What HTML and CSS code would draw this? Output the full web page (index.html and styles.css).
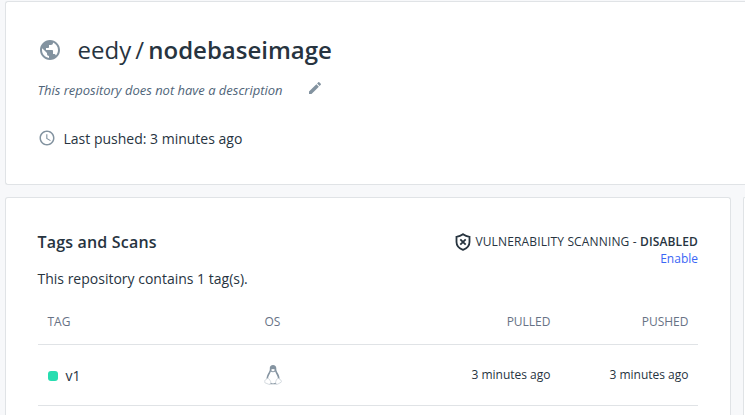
FILE: index.html
```html
<!DOCTYPE html>
<html lang="en">
<head>
<meta charset="utf-8">
<title>eedy/nodebaseimage</title>
<link rel="stylesheet" href="styles.css">
</head>
<body>
<main class="page">
  <header class="card repo">
    <div class="repo-title">
      <svg class="globe" viewBox="0 0 24 24"><path d="M12 2C6.480 2 2 6.480 2 12s4.480 10 10 10 10-4.480 10-10S17.520 2 12 2zm-1 17.930c-3.950-.49-7-3.850-7-7.930 0-.62.080-1.210.210-1.790L9 15v1c0 1.100.9 2 2 2v1.930zm6.900-2.540c-.26-.81-1-1.390-1.900-1.390h-1v-3c0-.55-.45-1-1-1H8v-2h2c.55 0 1-.45 1-1V7h2c1.100 0 2-.9 2-2v-.41c2.930 1.190 5 4.060 5 7.410 0 2.080-.8 3.970-2.100 5.390z"/></svg>
      <h1><span class="owner">eedy</span><span class="slash">/</span><span class="name">nodebaseimage</span></h1>
    </div>
    <div class="description">
      <em>This repository does not have a description</em>
      <svg class="pencil" viewBox="0 0 24 24"><path d="M3 17.250V21h3.750L17.810 9.940l-3.750-3.750L3 17.250zM20.710 7.040c.39-.39.39-1.020 0-1.410l-2.340-2.340c-.39-.39-1.020-.39-1.410 0l-1.830 1.830 3.750 3.750 1.830-1.830z"/></svg>
    </div>
    <div class="pushed">
      <svg class="clock" viewBox="0 0 24 24"><path d="M11.990 2C6.470 2 2 6.480 2 12s4.470 10 9.990 10C17.520 22 22 17.520 22 12S17.520 2 11.990 2zM12 20c-4.420 0-8-3.580-8-8s3.580-8 8-8 8 3.580 8 8-3.580 8-8 8zm.5-13H11v6l5.250 3.150.75-1.230-4.500-2.670z"/></svg>
      <span>Last pushed: 3 minutes ago</span>
    </div>
  </header>
  <div class="columns">
    <section class="card tags">
      <div class="tags-head">
        <h2>Tags and Scans</h2>
        <div class="scan">
          <div class="scan-status">
            <svg class="shield" viewBox="0 0 16 18"><path d="M8 1.200c2 1.500 4.100 2.300 6.500 2.600v5.100c0 3.700-2.500 6.400-6.500 8-4-1.600-6.500-4.300-6.500-8V3.800C3.900 3.500 6 2.700 8 1.200z"/><path d="M5.300 6.300l5.400 5.400M10.700 6.300l-5.400 5.400"/></svg>
            <span>VULNERABILITY SCANNING - <b>DISABLED</b></span>
          </div>
          <a class="enable">Enable</a>
        </div>
      </div>
      <p class="count">This repository contains 1 tag(s).</p>
      <div class="row row-head"><span>TAG</span><span>OS</span><span class="right">PULLED</span><span class="right">PUSHED</span></div>
      <div class="row row-body">
        <span class="tag"><i class="status"></i>v1</span>
        <span class="os"><svg class="tux" viewBox="0 0 18 22"><path class="body" d="M5.800 4.500C5.600 2.200 7 .9 9 .9s3.400 1.300 3.300 3.600c-.1 2 .6 3.300 1.700 5 1.200 2 1.700 3.800 1.400 5.800L13 20.200H5L2.600 15.300c-.2-2 .4-3.800 1.500-5.800C5.300 7.800 5.900 6.500 5.800 4.500z"/><path class="belly" d="M6.800 7.500c1.300 1 3 1 4.400 0 .7 2.500 2.700 4.500 2.800 7 0 2-2 4.900-5 4.900s-5-2.900-5-4.900c.1-2.500 2.100-4.500 2.800-7z"/><path class="face" d="M7.300 5.500C8 4.700 10 4.700 10.700 5.500 11 6.500 9.800 7.300 9 7.300s-2-.8-1.700-1.800z"/><path class="foot" d="M3.300 14.400c1.400-.3 2.300 1.200 3.300 3 .7 1.300-.3 3.200-2 2.800L1 18.800c-.8-.4 0-1.500-.1-2.400.1-.8 1.500-.5 2.400-2zM14.700 14.400c-1.400-.3-2.300 1.200-2.900 3-.5 1.300.2 3.200 1.900 2.800l3.500-2c.7-.5-.3-1.100-.2-2-.1-.8-1.400-.3-2.300-1.800z"/></svg></span>
        <span class="right">3 minutes ago</span>
        <span class="right">3 minutes ago</span>
      </div>
    </section>
    <aside class="card side"></aside>
  </div>
</main>
</body>
</html>
```
FILE: styles.css
```css
* { box-sizing: border-box; }
body {
  margin: 0;
  height: 415px;
  overflow: hidden;
  background: #f7f8fa;
  color: #27343f;
  font-family: "Open Sans", sans-serif;
  font-size: 14px;
}
h1, h2, p { margin: 0; }
svg { display: block; flex: none; fill: #8393a0; }
.page { height: 415px; padding: 1px 0 0 5px; overflow: hidden; }
.card {
  background: #fff;
  border: 1px solid #e0e3e6;
  border-radius: 3px;
}
.repo { height: 184px; padding: 32px 32px 0 31.5px; border-right: 0; border-radius: 3px 0 0 3px; }
.repo-title { display: flex; align-items: center; height: 32px; }
.globe { width: 24px; height: 24px; }
h1 {
  display: flex;
  margin: 0 0 0 16px;
  font-size: 24px;
  line-height: 32px;
  font-weight: 400;
}
.slash { margin: 0 4.300px 0 4px; }
.name { font-weight: 600; letter-spacing: -.01px; }
.description {
  display: flex;
  align-items: center;
  height: 20px;
  margin-top: 14px;
  color: #506579;
  font-size: 13px;
}
.description em { letter-spacing: -.015px; }
.pencil { width: 16px; height: 16px; margin: -4px 0 0 25px; }
.pushed { display: flex; align-items: center; height: 20px; margin-top: 28px; }
.clock { width: 18px; height: 18px; margin-right: 8px; }
.columns { display: flex; gap: 12px; margin-top: 12px; }
.tags { flex: none; width: 726px; height: 218px; padding: 32px 32px 0 31.5px; border-bottom: 0; border-radius: 3px 3px 0 0; }
.side { flex: 1; height: 218px; border-width: 1px 0 0 1px; border-radius: 3px 0 0 0; }
.tags-head { display: flex; justify-content: space-between; height: 39px; }
h2 { font-size: 16px; font-weight: 600; line-height: 24px; letter-spacing: .18px; }
.scan { display: flex; flex-direction: column; align-items: flex-end; font-size: 12px; line-height: 17px; padding-top: 3px; }
.scan-status { display: flex; align-items: center; height: 17px; letter-spacing: .14px; }
.shield { width: 16px; height: 18px; margin-right: 4px; fill: none; stroke: #27343f; stroke-width: 1.8; }
b { font-weight: 600; }
.enable { color: #3b66f5; }
.count { height: 20px; line-height: 20px; }
.row {
  display: grid;
  grid-template-columns: 217px 168px 138px 138px;
  align-items: center;
  border-bottom: 1px solid #e0e3e6;
  font-size: 12px;
}
.row > span { padding: 0 10px; }
.row-head { height: 56px; padding-top: 10px; color: #677285; }
.row-body { height: 61px; }
.right { text-align: right; }
.row-body .right { margin-top: -2px; }
.tag { display: flex; align-items: center; font-size: 14px; }
.status { width: 10px; height: 10px; border-radius: 3px; margin: 1px 8px 0 0; background: #27ddb0; }
.tux { width: 18px; height: 22px; margin-left: -1px; }
.body { fill: #8594a1; }
.belly, .face { fill: #fff; }
.foot { fill: #fff; stroke: #c9d1d7; stroke-width: .8; }
```
